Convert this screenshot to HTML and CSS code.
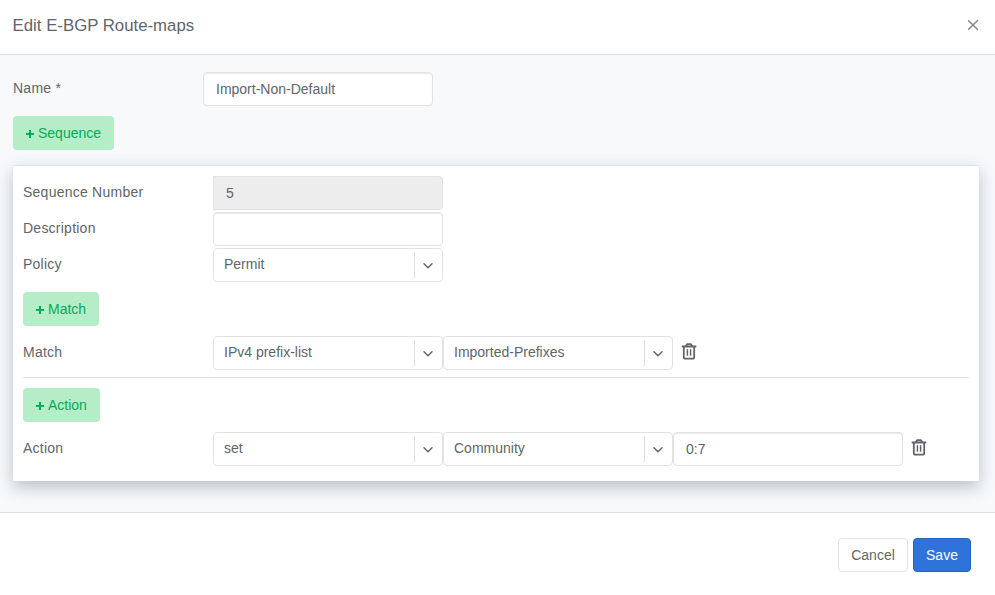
FILE: index.html
```html
<!DOCTYPE html>
<html lang="en">
<head>
<meta charset="utf-8">
<title>Edit E-BGP Route-maps</title>
<link rel="stylesheet" href="styles.css">
</head>
<body>
<svg class="defs" width="0" height="0" aria-hidden="true">
  <symbol id="chevron" viewBox="0 0 10 6"><path d="M1 0.8 5 4.8 9 0.8" fill="none" stroke="currentColor" stroke-width="1.4" stroke-linecap="round"/></symbol>
  <symbol id="plus" viewBox="0 0 8 8"><path d="M4 0v8M0 4h8" fill="none" stroke="currentColor" stroke-width="2"/></symbol>
  <symbol id="trash" viewBox="0 0 16 18"><path d="M1.5 4.5h13M4.7 4.2 6 2.2h4l1.3 2M2.8 4.5v10.4c0 1.2.6 1.8 1.8 1.8h6.8c1.2 0 1.8-.6 1.8-1.8V4.5" fill="none" stroke="currentColor" stroke-width="1.8" stroke-linecap="round" stroke-linejoin="round"/><path d="M6.4 7.2v6.6M9.6 7.2v6.6" fill="none" stroke="currentColor" stroke-width="1.5"/></symbol>
</svg>
<header class="header">
  <h1 class="title">Edit E-BGP Route-maps</h1>
  <svg class="close" viewBox="0 0 12 12"><path d="M1.2 1.2 10.8 10.8M10.8 1.2 1.2 10.8" fill="none" stroke="currentColor" stroke-width="1.4"/></svg>
</header>
<main class="content">
  <div class="row">
    <label class="label">Name *</label>
    <div class="input">Import-Non-Default</div>
  </div>
  <button class="add"><svg><use href="#plus"/></svg><span>Sequence</span></button>
  <section class="card">
    <div class="row"><label class="label">Sequence Number</label><div class="input readonly">5</div></div>
    <div class="row"><label class="label">Description</label><div class="input"></div></div>
    <div class="row"><label class="label">Policy</label><div class="select"><span>Permit</span><i><svg><use href="#chevron"/></svg></i></div></div>
    <button class="add"><svg><use href="#plus"/></svg><span>Match</span></button>
    <div class="row">
      <label class="label">Match</label>
      <div class="select"><span>IPv4 prefix-list</span><i><svg><use href="#chevron"/></svg></i></div>
      <div class="select"><span>Imported-Prefixes</span><i><svg><use href="#chevron"/></svg></i></div>
      <svg class="trash"><use href="#trash"/></svg>
    </div>
    <hr class="rule">
    <button class="add"><svg><use href="#plus"/></svg><span>Action</span></button>
    <div class="row">
      <label class="label">Action</label>
      <div class="select"><span>set</span><i><svg><use href="#chevron"/></svg></i></div>
      <div class="select"><span>Community</span><i><svg><use href="#chevron"/></svg></i></div>
      <div class="input">0:7</div>
      <svg class="trash"><use href="#trash"/></svg>
    </div>
  </section>
</main>
<footer class="footer">
  <button class="btn">Cancel</button>
  <button class="btn primary">Save</button>
</footer>
</body>
</html>
```
FILE: styles.css
```css
* { box-sizing: border-box; }
body {
  margin: 0;
  height: 595px;
  display: flex;
  flex-direction: column;
  overflow: hidden;
  background: #fff;
  color: #5f6568;
  font: 14px/20px "Liberation Sans", Arial, sans-serif;
}
button { font: inherit; }
.defs { position: absolute; }
.header {
  height: 55px;
  display: flex;
  justify-content: space-between;
  align-items: flex-start;
  padding: 15px 16px 0 12.6px;
  border-bottom: 1px solid #dfe2e4;
}
.title { margin: 0; font-size: 16.8px; font-weight: 400; line-height: 21px; }
.close { width: 12px; height: 12px; margin-top: 4px; color: #7d8587; }
.content {
  height: 457px;
  padding: 16px 16px 0 13px;
  background: #f7f9fb;
}
.row { height: 36px; display: flex; padding: 1px 0; }
.label { width: 190px; padding-top: 6px; letter-spacing: .24px; }
.input, .select {
  width: 230px;
  height: 34px;
  border: 1px solid #e2e2e3;
  border-radius: 4px;
  background: #fff;
}
.input { padding: 6px 12px; box-shadow: inset 0 1px 1px #e8e9ea; }
.readonly { background: #ededee; border-radius: 0 4px 4px 0; box-shadow: none; }
.select { display: flex; justify-content: space-between; padding: 3px 0 3px 10px; }
.select span { padding-top: 2px; }
.select i {
  width: 28px;
  height: 26px;
  border-left: 1px solid #dedfe0;
  padding: 11px 0 0 8px;
}
.select svg { display: block; width: 10px; height: 6px; }
.add {
  height: 34px;
  display: flex;
  align-items: center;
  gap: 4px;
  margin: 9px 0;
  padding: 0 13px;
  border: 0;
  border-radius: 4px;
  background: #b5edc8;
  color: #08a956;
}
.add svg { width: 8px; height: 8px; margin-top: 2px; }
.content > .add { margin: 9px 0 15px; }
.card {
  height: 316px;
  padding: 9px 10px 0;
  border-top: 1px solid #e0e4e6;
  background: #fff;
  box-shadow: 0 6px 15px rgba(72, 98, 105, .36);
}
.trash { width: 16px; height: 18px; margin: 6px 0 0 8px; }
.rule { margin: 6px 0 10px; border: 0; border-top: 1px solid #dedfe0; }
.footer {
  flex: 1;
  display: flex;
  justify-content: flex-end;
  gap: 5px;
  padding: 25px 24px 0;
  border-top: 1px solid #e0e2e3;
  background: #fff;
  position: relative;
}
.btn {
  height: 34px;
  width: 70px;
  padding: 0;
  border: 1px solid #e1e2e3;
  border-radius: 4px;
  background: #fff;
  color: #5f6568;
}
.primary { width: 58px; background: #2d73da; border-color: #2865b8; color: #fff; }
```
